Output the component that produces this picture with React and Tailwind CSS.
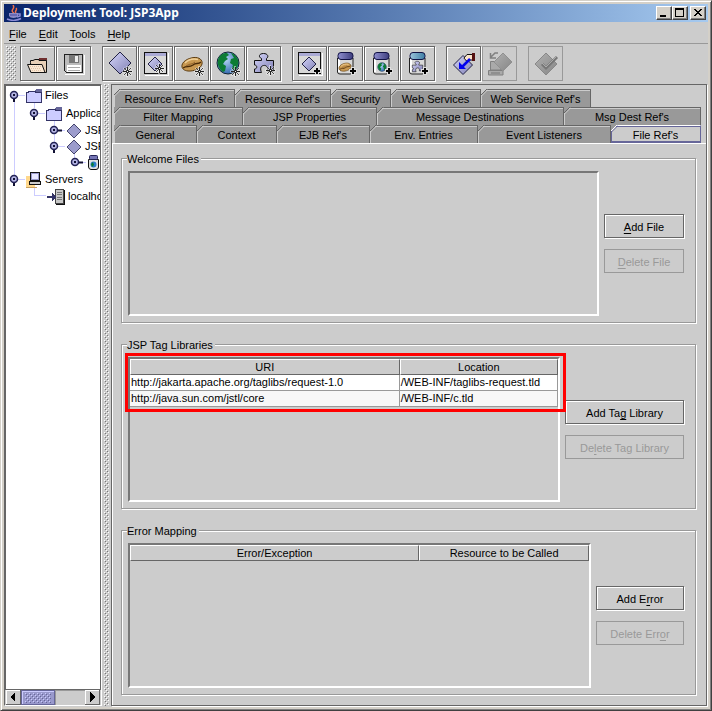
import { useState } from "react";
import clsx from "clsx";

const menus = ["File", "Edit", "Tools", "Help"];

const tabRows = [
  [
    { label: "Resource Env. Ref's", size: "w-[121px]" },
    { label: "Resource Ref's", size: "w-[96px]" },
    { label: "Security", size: "w-[60px]" },
    { label: "Web Services", size: "w-[90px]" },
    { label: "Web Service Ref's", size: "w-[110px]" },
  ],
  [
    { label: "Filter Mapping", size: "grow w-[129px]" },
    { label: "JSP Properties", size: "grow w-[134px]" },
    { label: "Message Destinations", size: "grow w-[187px]" },
    { label: "Msg Dest Ref's", size: "grow w-[137px]" },
  ],
  [
    { label: "General", size: "grow w-[83px]" },
    { label: "Context", size: "grow w-[80px]" },
    { label: "EJB Ref's", size: "grow w-[93px]" },
    { label: "Env. Entries", size: "grow w-[108px]" },
    { label: "Event Listeners", size: "grow w-[133px]" },
    { label: "File Ref's", size: "grow w-[90px]" },
  ],
];

const tagLibraries = [
  ["http://jakarta.apache.org/taglibs/request-1.0", "/WEB-INF/taglibs-request.tld"],
  ["http://java.sun.com/jstl/core", "/WEB-INF/c.tld"],
];

/* ---------- drawing helpers ---------- */

function Defs() {
  return (
    <svg className="absolute h-0 w-0" aria-hidden="true">
      <defs>
        <linearGradient id="lilac" x1="0" y1="0" x2="1" y2="1">
          <stop offset="0" stopColor="#d6d6fa" />
          <stop offset="1" stopColor="#7f7fb4" />
        </linearGradient>
        <linearGradient id="greyed" x1="0" y1="0" x2="1" y2="1">
          <stop offset="0" stopColor="#b0b0b0" />
          <stop offset="1" stopColor="#868686" />
        </linearGradient>
        <linearGradient id="lid" x1="0" y1="0" x2="1" y2="0">
          <stop offset="0" stopColor="#8f8fd0" />
          <stop offset="1" stopColor="#3c3c7c" />
        </linearGradient>
        <linearGradient id="lidBlue" x1="0" y1="0" x2="1" y2="0">
          <stop offset="0" stopColor="#9cc4dc" />
          <stop offset="1" stopColor="#3c7ca4" />
        </linearGradient>
        <radialGradient id="sea" cx="0.4" cy="0.35" r="0.7">
          <stop offset="0" stopColor="#b4d4f4" />
          <stop offset="1" stopColor="#2c64ac" />
        </radialGradient>
        <pattern id="bumps" width="4" height="4" patternUnits="userSpaceOnUse">
          <path d="M0 0h1v1H0zM2 2h1v1H2z" fill="#fff" />
          <path d="M1 1h1v1H1zM3 3h1v1H3z" fill="#777" />
        </pattern>
        <pattern id="thumbBumps" width="4" height="4" patternUnits="userSpaceOnUse">
          <path d="M0 0h1v1H0zM2 2h1v1H2z" fill="#ccccff" />
          <path d="M1 1h1v1H1zM3 3h1v1H3z" fill="#666699" />
        </pattern>
      </defs>
    </svg>
  );
}

function Bumps({ className, pattern = "url(#bumps)" }) {
  return (
    <svg className={className} aria-hidden="true" shapeRendering="crispEdges">
      <rect width="100%" height="100%" fill={pattern} />
    </svg>
  );
}

function Icon({ children }) {
  return (
    <svg width="33" height="33" viewBox="0 0 33 33" fill="none" aria-hidden="true">
      {children}
    </svg>
  );
}

function Spark({ x, y }) {
  return (
    <g transform={`translate(${x} ${y})`}>
      <path d="M0-5V6M-5 .5H6M-3.5-3L4.500 4.500M4.500-3.500L-3.500 4.500" stroke="#fff" strokeWidth="2" opacity="0.5" />
      <path d="M.5-4V5M-4 .5H5" stroke="#222" />
      <path d="M-3-3L4 4M4-3L-3 4" stroke="#222" strokeWidth="0.8" />
      <path d="M0 0h1v1H0z" fill="#fff" />
    </g>
  );
}

function Plus({ x, y }) {
  return (
    <g transform={`translate(${x} ${y})`} shapeRendering="crispEdges">
      <path d="M-2-4h4v2h2v4h-2v2h-4v-2h-2v-4h2z" fill="#ddd" />
      <path d="M-1-3h2v2h2v2h-2v2h-2v-2h-2v-2h2z" fill="#000" />
    </g>
  );
}

function Diamond({ x, y, r, fill = "url(#lilac)", stroke = "#222244" }) {
  return <path d={`M${x} ${y - r}L${x + r} ${y}L${x} ${y + r}L${x - r} ${y}Z`} fill={fill} stroke={stroke} />;
}

function Bean({ x, y, scale = 1 }) {
  return (
    <g transform={`translate(${x} ${y}) scale(${scale})`}>
      <path
        d="M-10 3C-11-2-4-6 2-6.500C7-7 11-4 10 0C9 5 1 7.500-4 7C-8 6.500-9.500 5-10 3Z"
        fill="#c89850"
        stroke="#5c3c10"
      />
      <path d="M-7-1C-3-5 2-5.500 6-4.500" stroke="#f0d098" strokeWidth="1.500" />
      <path d="M-9 4C-5 1-3 4 1 1C4-2 6 1 9-2" stroke="#4c2c08" strokeWidth="1.300" />
      <path d="M-6 2C-2-1 0 1 3-2" stroke="#94642c" />
    </g>
  );
}

function Globe({ x, y, scale = 1 }) {
  return (
    <g transform={`translate(${x} ${y}) scale(${scale})`}>
      <circle r="11" fill="url(#sea)" stroke="#123" />
      <path d="M-10-3C-9-8-4-10.500-1-10L1-8L-2-6L0-4L-3-2L-5 1L-2 3L-3 8L-5 9C-9 6-11 1-10-3Z" fill="#0c7c34" />
      <path d="M3-10C7-9 10-5 10.500-1L9 5L6 8L4 5L5 2L2 0L3-4L6-5Z" fill="#0c7c34" />
    </g>
  );
}

function Puzzle({ x, y, scale = 1 }) {
  return (
    <g transform={`translate(${x} ${y}) scale(${scale})`}>
      <path
        d="M.5 7.500H7.500V5.500C4 4 5 .5 9.500 .5S15 4 12.500 5.500V7.500H19.500V18H13.500C14 13.500 12 12 9.500 12.500C6.500 13 6 16 7.500 19.500H.5V16C3.500 16 3.500 12 .5 12Z"
        fill="url(#lilac)"
        stroke="#111"
      />
    </g>
  );
}

function WindowFrame() {
  return (
    <g shapeRendering="crispEdges">
      <path d="M6 28H29V6" stroke="#fff" />
      <rect x="5.500" y="5.500" width="22" height="21" fill="#d8d8d8" stroke="#111" />
      <path d="M6 6H27V9H6Z" fill="#aaaad4" />
    </g>
  );
}

function Jar({ lid = "url(#lid)", children }) {
  return (
    <>
      <path d="M8.500 11V25Q8.500 27 11 27H21Q24 27 24 25V11Z" fill="#d8d8d8" stroke="#222" />
      <path d="M10 12V25" stroke="#fff" strokeWidth="2" />
      <rect x="9" y="5.500" width="15" height="7" rx="3" fill={lid} stroke="#111144" />
      {children}
    </>
  );
}

const toolGroups = [
  [
    {
      name: "Open",
      icon: (
        <>
          <path d="M18 11H26V14H18Z" fill="#703030" />
          <path d="M9.500 15.500V13.500H12L14 12.500H18V13.500H25.500V25.500H10Z" fill="#e8d0b8" stroke="#111" />
          <path d="M6.500 17.500H21L24 25.500H10Z" fill="#fbe8d4" stroke="#111" />
          <path d="M9 19.500H20M10 21.500H20M11 23.500H21" stroke="#e0c4a8" strokeDasharray="1 1" />
        </>
      ),
    },
    {
      name: "Save",
      icon: (
        <g shapeRendering="crispEdges">
          <path d="M8 27.500H27.500V8" stroke="#fff" />
          <path d="M7.500 7.500H25.500V25.500H9.500L7.500 23.500Z" fill="#bbb" stroke="#222" />
          <rect x="12" y="8" width="10" height="8" fill="#777" />
          <rect x="18" y="9" width="3" height="6" fill="#eee" />
          <rect x="10" y="18" width="14" height="7" fill="#fff" />
          <path d="M11 20.500H23M11 23.500H23" stroke="#aaa" />
        </g>
      ),
    },
  ],
  [
    { name: "New application", icon: <><Diamond x={17} y={16} r={11} /><Spark x={24} y={24} /></> },
    { name: "New client", icon: <><WindowFrame /><Diamond x={16} y={17} r={7} /><Spark x={20} y={21} /></> },
    { name: "New bean", icon: <><Bean x={17} y={17} /><Spark x={24} y={24} /></> },
    { name: "New web component", icon: <><Globe x={17} y={16} /><Spark x={24} y={24} /></> },
    { name: "New connector", icon: <><Puzzle x={7} y={6} /><Spark x={23} y={23} /></> },
  ],
  [
    { name: "Add client", icon: <><WindowFrame /><Diamond x={16} y={17} r={7} /><Plus x={24} y={24} /></> },
    { name: "Add bean jar", icon: <><Jar><Bean x={16} y={20} scale={0.6} /></Jar><Plus x={24} y={24} /></> },
    { name: "Add web archive", icon: <><Jar><Globe x={17} y={20} scale={0.4} /></Jar><Plus x={24} y={24} /></> },
    {
      name: "Add connector archive",
      icon: <><Jar lid="url(#lidBlue)"><Puzzle x={11} y={14} scale={0.55} /></Jar><Plus x={24} y={24} /></>,
    },
  ],
  [
    {
      name: "Update",
      icon: (
        <>
          <Diamond x={16} y={18} r={9.5} />
          <path d="M17 11L20 7.500H26V13H23L21 15L18 12.500Z" fill="#fbe4cc" stroke="#111" />
          <path d="M25 6h3v8h-3z" fill="#511" />
          <path d="M23 12L15 20" stroke="#0000ee" strokeWidth="2.500" />
          <path d="M12 15V22H19Z" fill="#0000ee" />
        </>
      ),
    },
    {
      name: "Deploy",
      disabled: true,
      icon: (
        <>
          <path d="M7.500 14.500H18V23H7.500ZM5.500 23.500H20V28H5.500Z" fill="#aaa" stroke="#808080" />
          <path d="M8 26H17" stroke="#777" />
          <Diamond x={20} y={15} r={9} fill="url(#greyed)" stroke="#909090" />
          <path d="M15 6H12L8 10M7.500 6V11H13" stroke="#808080" strokeWidth="1.500" />
        </>
      ),
    },
  ],
  [
    {
      name: "Verify",
      disabled: true,
      icon: (
        <>
          <Diamond x={17} y={17} r={11} fill="url(#greyed)" stroke="#888" />
          <path d="M13 17L17 21L28 10" stroke="#777" strokeWidth="3" />
          <path d="M13 16L17 20L27 10" stroke="#aaa" />
        </>
      ),
    },
  ],
];

/* ---------- window chrome ---------- */

function CaptionButton({ label, children }) {
  return (
    <button
      type="button"
      aria-label={label}
      className="h-[14px] w-4 border border-t-white border-r-[#404040] border-b-[#404040] border-l-white bg-[#d4d0c8] shadow-[inset_-1px_-1px_#808080]"
    >
      <svg width="14" height="12" viewBox="0 0 14 12" fill="none" stroke="#000" shapeRendering="crispEdges">
        {children}
      </svg>
    </button>
  );
}

function TitleBar() {
  return (
    <header className="flex h-[18px] shrink-0 items-center bg-linear-to-r from-[#0a246a] to-[#a6caf0] pr-[2px] pl-[2px]">
      <svg width="16" height="16" viewBox="0 0 16 16" fill="none" aria-hidden="true">
        <path d="M8 8C3 5 10 4 7 0M10 8C8 6 12 5 10 3" stroke="#f07048" strokeWidth="1.500" />
        <path d="M3 8H12V11Q11 13 7.500 13Q4 13 3 11Z" fill="#8c8cc8" />
        <path d="M12 9H14V11L11 12M1 14Q8 17 15 13.500" stroke="#8c8cd8" strokeWidth="1.500" />
        <path d="M4 10H11" stroke="#4444a0" />
      </svg>
      <h1 className="ml-px grow font-['Noto_Sans','DejaVu_Sans_Condensed',sans-serif] text-[12px] leading-[16px] font-bold text-white">
        Deployment Tool: JSP3App
      </h1>
      <CaptionButton label="Minimize">
        <path d="M3 9H9" strokeWidth="2" />
      </CaptionButton>
      <CaptionButton label="Maximize">
        <path d="M2.500 1V9.500H10.500V1M2 1.500H11" />
        <path d="M2 2.500H11" />
      </CaptionButton>
      <span className="w-[2px]" />
      <CaptionButton label="Close">
        <path d="M3 2L10 9M4 2L11 9M10 2L3 9M11 2L4 9" />
      </CaptionButton>
    </header>
  );
}

function MenuBar() {
  return (
    <nav className="flex h-[22px] shrink-0 items-center gap-3 border-b border-[#999] px-[5px]">
      {menus.map((name) => (
        <button key={name} type="button" className="pt-[2px] leading-[16px]">
          <Mnemonic text={name} at={0} />
        </button>
      ))}
    </nav>
  );
}

function Mnemonic({ text, at }) {
  return (
    <>
      {text.slice(0, at)}
      <span className="underline underline-offset-2">{text[at]}</span>
      {text.slice(at + 1)}
    </>
  );
}

function ToolBar() {
  return (
    <div className="flex h-10 shrink-0 items-start gap-[11px] pt-[2px] pl-[2px]" role="toolbar">
      <Bumps className="-mr-[7px] h-[35px] w-[10px]" />
      {toolGroups.map((group) => (
        <div key={group[0].name} className="flex gap-px">
          {group.map((tool) => (
            <button
              key={tool.name}
              type="button"
              aria-label={tool.name}
              disabled={tool.disabled}
              className={clsx(
                "size-[35px] border",
                tool.disabled ? "border-[#999]" : "border-[#666] shadow-[1px_1px_#fff,inset_1px_1px_#fff]",
              )}
            >
              <Icon>{tool.icon}</Icon>
            </button>
          ))}
        </div>
      ))}
    </div>
  );
}

/* ---------- tree ---------- */

function Handle({ open }) {
  return (
    <svg className="shrink-0" width="20" height="16" viewBox="0 0 20 16" fill="none" aria-hidden="true">
      <path d="M10 8.500H19" stroke="#ccccff" />
      <path d={open ? "M8 8V15" : "M8 8.500H16"} stroke="#111133" strokeWidth="2" />
      <circle cx="8" cy="8" r="3.500" fill="#b4b4e4" stroke="#222255" strokeWidth="1.500" />
      <rect x="7" y="7" width="2" height="2" fill="#111133" />
    </svg>
  );
}

function FolderIcon() {
  return (
    <svg className="shrink-0" width="17" height="14" viewBox="0 0 17 14" aria-hidden="true" shapeRendering="crispEdges">
      <path d="M9 2L10 0H15L16 1V4H9Z" fill="#666699" />
      <path d="M.5 3.500H2L3 2.500H9L10 3.500H15.500V13.500H.5Z" fill="#ccccff" stroke="#333366" />
    </svg>
  );
}

function DiamondIcon() {
  return (
    <svg className="shrink-0" width="16" height="16" viewBox="0 0 16 16" aria-hidden="true">
      <Diamond x={8} y={8} r={7} fill="#9c9ccc" stroke="#44446c" />
    </svg>
  );
}

function JarIcon() {
  return (
    <svg className="shrink-0" width="13" height="15" viewBox="0 0 13 15" fill="none" aria-hidden="true">
      <path d="M1.500 4.500V12Q2 14.500 4 14.500H9Q11.500 14.500 11.500 12V4.500Z" fill="#e0e0e0" stroke="#111" />
      <rect x="2.500" y=".5" width="8" height="4" rx="1" fill="#7474b4" stroke="#222255" />
      <circle cx="6.500" cy="9.500" r="3" fill="#2c7ccc" />
      <path d="M4 9L6 7L7 10L5 12Z" fill="#0c7c34" />
    </svg>
  );
}

function ServersIcon() {
  return (
    <svg className="shrink-0" width="16" height="16" viewBox="0 0 16 16" aria-hidden="true" shapeRendering="crispEdges">
      <path d="M0 4H7V2H9V15H0Z" fill="#ffd88c" />
      <path d="M0 15H11V16H0Z" fill="#c8a060" />
      <rect x="4.500" y=".5" width="9" height="8" fill="#9999cc" stroke="#111" />
      <rect x="6" y="2" width="6" height="5" fill="#e8e8ff" />
      <rect x="3.500" y="9.500" width="11" height="3" fill="#ccc" stroke="#111" />
    </svg>
  );
}

function HostIcon() {
  return (
    <svg className="shrink-0" width="18" height="16" viewBox="0 0 18 16" fill="none" aria-hidden="true" shapeRendering="crispEdges">
      <rect x="8.500" y=".5" width="8" height="14" fill="#c8c8c8" stroke="#444" />
      <path d="M10 3.500H15M10 5.500H15M10 8.500H15M10 10.500H15" stroke="#777" />
      <path d="M17 1V15H9" stroke="#111" />
      <path d="M0 7H5V4L9 8L5 12V9H0Z" fill="#333366" />
    </svg>
  );
}

const treeRows = [
  { id: "files", label: "Files", row: "h-[18px] pl-0", open: true, Glyph: FolderIcon, gap: "gap-[2px]" },
  { id: "apps", label: "Applications", row: "h-[18px] pl-5", open: true, Glyph: FolderIcon, gap: "gap-[3px]" },
  { id: "jsp1", label: "JSP1App", row: "h-4 pl-10", open: false, Glyph: DiamondIcon, gap: "gap-[3px]" },
  { id: "jsp3", label: "JSP3App", row: "h-4 pl-10", open: true, Glyph: DiamondIcon, gap: "gap-[3px]" },
  { id: "war", label: "", row: "h-4 pl-[61px]", open: false, Glyph: JarIcon, gap: "gap-[3px]" },
  { id: "servers", label: "Servers", row: "h-[18px] pl-0", open: true, Glyph: ServersIcon, gap: "gap-[3px]" },
  { id: "host", label: "localhost", row: "h-4 pl-[41px]", Glyph: HostIcon, gap: "gap-[3px]" },
];

function TreeLines() {
  return (
    <svg className="absolute top-0 left-0" width="92" height="120" fill="none" stroke="#ccccff" shapeRendering="crispEdges">
      <path d="M8.500 14V90M28.500 14V22M48.500 30V56M68.500 66V74M28.500 101V109.500H40" />
    </svg>
  );
}

function TreePane() {
  return (
    <aside className="flex w-[98px] shrink-0 flex-col border border-t-[#666] border-r-white border-b-white border-l-[#666] bg-white shadow-[inset_1px_1px_#666,inset_-1px_0_#666]">
      <div className="relative m-px grow overflow-hidden">
        <TreeLines />
        <ul className="relative">
          {treeRows.map(({ id, label, row, open, Glyph, gap }) => (
            <li key={id} className={clsx("flex items-center whitespace-nowrap", row)}>
              {open === undefined ? null : <Handle open={open} />}
              <span className={clsx("flex items-center pt-px", gap)}>
                <Glyph />
                {label}
              </span>
            </li>
          ))}
        </ul>
      </div>
      <div className="flex h-4 border-t border-[#666] bg-[#ccc] pr-px pl-px">
        <ScrollButton label="Scroll left" d="M9 2V12L4 7Z" />
        <div className="flex w-[34px] items-center justify-center border border-[#666699] bg-[#9999cc] shadow-[inset_1px_1px_#ccccff]">
          <Bumps className="h-[10px] w-[26px]" pattern="url(#thumbBumps)" />
        </div>
        <div className="grow bg-[#ccc] shadow-[inset_1px_1px_#999]" />
        <ScrollButton label="Scroll right" d="M5 2V12L10 7Z" />
      </div>
    </aside>
  );
}

function ScrollButton({ label, d }) {
  return (
    <button
      type="button"
      aria-label={label}
      className="w-[15px] border-r border-b border-[#666] bg-[#ccc] shadow-[inset_1px_1px_#fff]"
    >
      <svg width="14" height="14" viewBox="0 0 14 14" shapeRendering="crispEdges">
        <path d={d} fill="#000" />
      </svg>
    </button>
  );
}

/* ---------- tabs ---------- */

function Tab({ label, size, selected, firstRow, onSelect }) {
  return (
    <button
      type="button"
      role="tab"
      aria-selected={selected}
      onClick={onSelect}
      className={clsx(
        "relative h-[18px] shrink border-t border-r pt-px text-center leading-[16px] whitespace-nowrap",
        size,
        selected
          ? "border-t-white border-r-[#666699] bg-[#ccc] shadow-[inset_1px_1px_#666699,inset_0_-2px_#666699]"
          : "border-[#666] bg-[#999] shadow-[inset_1px_1px_#ccc]",
      )}
    >
      <svg className="absolute -top-px left-0" width="7" height="7" viewBox="0 0 7 7" fill="none" aria-hidden="true">
        <path d="M0 0H6L0 6Z" fill={firstRow ? "#ccc" : "#999"} />
        <path d="M0 6L6 0" stroke={selected ? "#fff" : "#666"} />
        <path d="M0 7.500L7 .5" stroke={selected ? "#666699" : "#ccc"} />
      </svg>
      {label}
    </button>
  );
}

function TabStrip() {
  const [active, setActive] = useState("File Ref's");

  return (
    <div role="tablist" className="pt-1 pr-[5px] pl-[2px]">
      {tabRows.map((row, index) => (
        <div key={row[0].label} className="flex">
          {row.map((tab) => (
            <Tab
              key={tab.label}
              {...tab}
              firstRow={index === 0}
              selected={tab.label === active}
              onSelect={() => setActive(tab.label)}
            />
          ))}
        </div>
      ))}
    </div>
  );
}

/* ---------- file ref's page ---------- */

function PushButton({ text, at, disabled }) {
  return (
    <button
      type="button"
      disabled={disabled}
      className={clsx(
        "h-6 w-full border pt-[2px] leading-[16px]",
        disabled
          ? "border-[#999] text-[#999]"
          : "border-[#666] shadow-[1px_1px_#fff,inset_1px_1px_#fff]",
      )}
    >
      <Mnemonic text={text} at={at} />
    </button>
  );
}

function Group({ title, buttonWidth, buttons, children }) {
  return (
    <fieldset className="flex min-w-0 flex-1 gap-[5px] border border-[#999] pt-[5px] pr-[11px] pb-[6px] pl-[6px] shadow-[1px_1px_#fff,inset_1px_1px_#fff]">
      <legend className="-ml-px h-[15px] bg-[#ccc] pr-[2px] leading-[16px]">{title}</legend>
      <div className="relative min-w-0 grow border-2 border-t-[#777] border-r-white border-b-white border-l-[#777]">
        {children}
      </div>
      <div className={clsx("flex shrink-0 flex-col justify-center gap-[11px]", buttonWidth)}>
        {buttons.map((button) => (
          <PushButton key={button.text} {...button} />
        ))}
      </div>
    </fieldset>
  );
}

function Grid({ columns, rows = [] }) {
  return (
    <table className="w-full table-fixed border-separate border-spacing-0">
      <thead>
        <tr>
          {columns.map(({ label, width }) => (
            <th
              key={label}
              className={clsx(
                "h-[15px] border border-t-white border-r-[#666] border-b-[#666] border-l-white p-0 pt-px leading-[13px] font-normal",
                width,
              )}
            >
              {label}
            </th>
          ))}
        </tr>
      </thead>
      <tbody>
        {rows.map((cells, index) => (
          <tr key={cells[0]} className={index % 2 ? "bg-[#f7f7f7]" : "bg-white"}>
            {cells.map((cell) => (
              <td key={cell} className="h-4 border-r border-b border-[#999] p-0 pl-px leading-[15px] whitespace-nowrap">
                {cell}
              </td>
            ))}
          </tr>
        ))}
      </tbody>
    </table>
  );
}

function FileRefsPage() {
  return (
    <div className="flex grow flex-col gap-[14px] border-t border-l border-white pt-[7px] pr-[10px] pb-[10px] pl-2">
      <Group
        title="Welcome Files"
        buttonWidth="w-20"
        buttons={[
          { text: "Add File", at: 0 },
          { text: "Delete File", at: 0, disabled: true },
        ]}
      />
      <Group
        title="JSP Tag Libraries"
        buttonWidth="w-[119px]"
        buttons={[
          { text: "Add Tag Library", at: 6 },
          { text: "Delete Tag Library", at: 2, disabled: true },
        ]}
      >
        <Grid
          columns={[
            { label: "URI", width: "w-[63%]" },
            { label: "Location", width: "w-[37%]" },
          ]}
          rows={tagLibraries}
        />
        <div className="pointer-events-none absolute -top-[6px] -right-2 -left-[5px] z-10 h-[59px] border-3 border-[#ff0000]" />
      </Group>
      <Group
        title="Error Mapping"
        buttonWidth="w-[88px]"
        buttons={[
          { text: "Add Error", at: 5 },
          { text: "Delete Error", at: 10, disabled: true },
        ]}
      >
        <Grid
          columns={[
            { label: "Error/Exception", width: "w-[63%]" },
            { label: "Resource to be Called", width: "w-[37%]" },
          ]}
        />
      </Group>
    </div>
  );
}

export default function App() {
  return (
    <div className="flex h-screen min-h-[640px] flex-col border border-t-[#d4d0c8] border-r-[#404040] border-b-[#404040] border-l-[#d4d0c8] bg-[#d4d0c8] p-[3px] font-['Liberation_Sans',Arial,sans-serif] text-[11px] text-black shadow-[inset_1px_1px_#fff,inset_-1px_-1px_#808080]">
      <Defs />
      <TitleBar />
      <div className="flex min-h-0 grow flex-col bg-[#ccc]">
        <MenuBar />
        <ToolBar />
        <div className="flex min-h-0 grow pr-px pb-px">
          <TreePane />
          <Bumps className="mx-[2px] h-full w-[5px] shrink-0" />
          <main className="flex min-w-0 grow flex-col border border-[#666] shadow-[1px_1px_#fff]">
            <TabStrip />
            <FileRefsPage />
          </main>
        </div>
      </div>
    </div>
  );
}
